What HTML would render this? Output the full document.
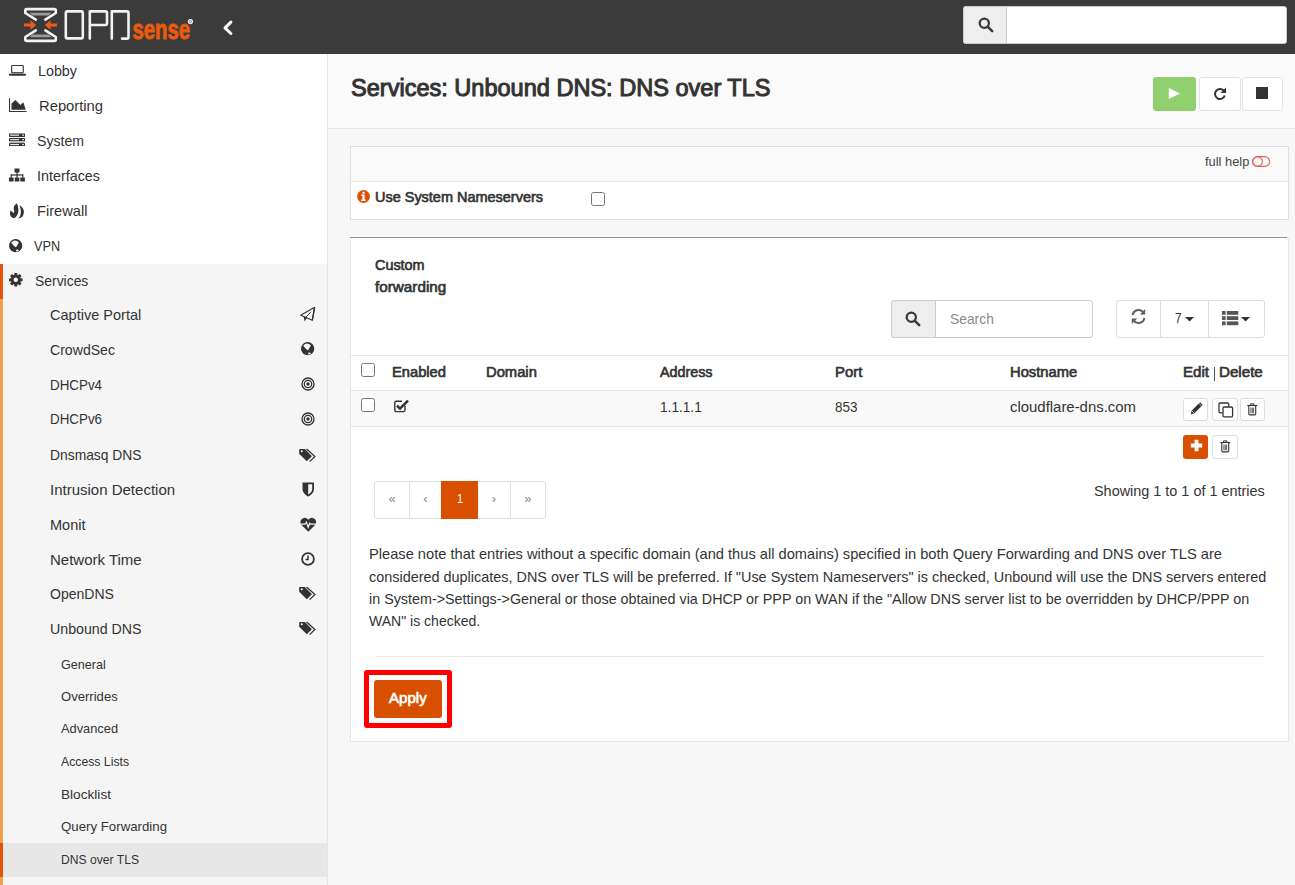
<!DOCTYPE html>
<html><head><meta charset="utf-8"><title>OPNsense</title>
<style>
*{box-sizing:border-box;margin:0;padding:0}
html,body{width:1295px;height:885px;overflow:hidden;background:#f7f7f7;font-family:"Liberation Sans",sans-serif;color:#333}
.a{position:absolute}
.t{position:absolute;line-height:0;white-space:nowrap;transform-origin:0 0}
svg{overflow:visible}
</style></head><body>
<div style="position:absolute;left:0;top:0;width:1295px;height:54px;background:#3b3b3b"></div>
<svg class="a" style="left:0;top:0" width="200" height="54" viewBox="0 0 200 54">
<g fill="none" stroke="#f2f2f2" stroke-width="2.6" stroke-linejoin="round" stroke-linecap="round">
<path d="M35.8 19.6 L25.3 13 V10.5 Q25.3 9.1 26.8 9.1 H54.3 Q55.8 9.1 55.8 10.5 V13 L45.3 19.6"/>
<path d="M35.8 30.4 L25.3 37 V39.5 Q25.3 40.9 26.8 40.9 H54.3 Q55.8 40.9 55.8 39.5 V37 L45.3 30.4"/>
<rect x="65.8" y="11.4" width="17" height="27" rx="1.6"/>
<path d="M89.8 38.6 V11.4 H105.5 Q107 11.4 107 13 V23.5 Q107 25 105.5 25 H89.8"/>
<path d="M111.8 38.6 V11.4 H127 Q128.5 11.4 128.5 13 V37 Q128.5 38.6 127 38.6 H122"/>
</g>
<path d="M29.5 12.8 H51.5 L48.5 15.6 H32.5Z M29.5 37.2 H51.5 L48.5 34.4 H32.5Z" fill="#9a9a9a"/>
<path d="M37 20.5 L44.2 20.5 L44.2 29.5 L37 29.5Z" fill="#343a40"/>
<path d="M24 23.6 H30.5 V20.3 L36.2 25 L30.5 29.7 V26.4 H24Z" fill="#f15a16"/>
<path d="M57 23.6 H50.5 V20.3 L44.8 25 L50.5 29.7 V26.4 H57Z" fill="#f15a16"/>
<text x="132.5" y="39.1" font-family="Liberation Sans" font-weight="bold" font-size="27.3" fill="#ec5a0c" textLength="57.6" lengthAdjust="spacingAndGlyphs" stroke="#ec5a0c" stroke-width="0.9">sense</text>
<circle cx="190.4" cy="21.6" r="2.6" fill="#f2f2f2"/><circle cx="190.4" cy="21.6" r="1.1" fill="none" stroke="#555" stroke-width="0.6"/>
</svg>
<svg class="a" style="left:220px;top:18px" width="16" height="20" viewBox="0 0 16 20"><path d="M10.9 4.1 L5 9.8 L10.9 15.5" fill="none" stroke="#fff" stroke-width="3" stroke-linejoin="round" stroke-linecap="round"/></svg>
<div class="a" style="left:963px;top:6px;width:324px;height:38px;background:#fff;border-radius:3px;border:1px solid #ccc"></div>
<div class="a" style="left:963px;top:6px;width:43.5px;height:38px;background:#eee;border-radius:3px 0 0 3px;border:1px solid #ccc;border-right:1px solid #ccc"></div>
<svg class="a" style="left:977.5px;top:16.5px" width="16" height="16" viewBox="0 0 16 16"><circle cx="6.3" cy="6.3" r="4.6" fill="none" stroke="#3a3a3a" stroke-width="2.3"/><path d="M9.6 9.6 L14.2 14.2" stroke="#3a3a3a" stroke-width="2.6" stroke-linecap="round"/></svg>
<div class="a" style="left:0;top:54px;width:328px;height:831px;background:#fff;border-right:1px solid #e4e4e4"></div>
<div class="a" style="left:0;top:264px;width:327px;height:621px;background:#f5f5f5"></div>
<div class="a" style="left:0;top:264px;width:3px;height:621px;background:#f49d4f"></div>
<div class="a" style="left:0;top:264px;width:3px;height:35px;background:#e35205"></div>
<div class="a" style="left:3px;top:264px;width:1px;height:621px;background:#fbfbfb"></div>
<div class="a" style="left:0;top:843px;width:327px;height:34px;background:#e7e7e7"></div>
<div class="a" style="left:0;top:843px;width:3px;height:34px;background:#e35205"></div>
<div class="t" style="left:38.30px;top:70.80px;font-size:15px;color:#333;transform:scaleX(0.9535);">Lobby</div>
<div class="t" style="left:39.30px;top:105.90px;font-size:15px;color:#333;transform:scaleX(0.9846);">Reporting</div>
<div class="t" style="left:36.80px;top:140.80px;font-size:15px;color:#333;transform:scaleX(0.9400);">System</div>
<div class="t" style="left:36.70px;top:175.80px;font-size:15px;color:#333;transform:scaleX(0.9560);">Interfaces</div>
<div class="t" style="left:36.90px;top:211.00px;font-size:15px;color:#333;transform:scaleX(0.9749);">Firewall</div>
<div class="t" style="left:34.00px;top:246.30px;font-size:15px;color:#333;transform:scaleX(0.8442);">VPN</div>
<div class="t" style="left:34.50px;top:280.90px;font-size:15px;color:#333;transform:scaleX(0.9270);">Services</div>
<div class="t" style="left:50.00px;top:314.70px;font-size:15px;color:#333;transform:scaleX(0.9692);">Captive Portal</div>
<div class="t" style="left:50.00px;top:349.60px;font-size:15px;color:#333;transform:scaleX(0.9393);">CrowdSec</div>
<div class="t" style="left:50.00px;top:384.80px;font-size:15px;color:#333;transform:scaleX(0.8919);">DHCPv4</div>
<div class="t" style="left:50.00px;top:419.20px;font-size:15px;color:#333;transform:scaleX(0.8919);">DHCPv6</div>
<div class="t" style="left:50.00px;top:454.70px;font-size:15px;color:#333;transform:scaleX(0.9234);">Dnsmasq DNS</div>
<div class="t" style="left:50.00px;top:489.60px;font-size:15px;color:#333;">Intrusion Detection</div>
<div class="t" style="left:50.00px;top:524.80px;font-size:15px;color:#333;transform:scaleX(0.9673);">Monit</div>
<div class="t" style="left:50.00px;top:559.80px;font-size:15px;color:#333;">Network Time</div>
<div class="t" style="left:50.00px;top:593.60px;font-size:15px;color:#333;transform:scaleX(0.9357);">OpenDNS</div>
<div class="t" style="left:50.00px;top:628.80px;font-size:15px;color:#333;transform:scaleX(0.9462);">Unbound DNS</div>
<div class="t" style="left:61.20px;top:664.72px;font-size:13.5px;color:#333;transform:scaleX(0.9313);">General</div>
<div class="t" style="left:61.20px;top:697.32px;font-size:13.5px;color:#333;transform:scaleX(0.9692);">Overrides</div>
<div class="t" style="left:61.20px;top:729.32px;font-size:13.5px;color:#333;transform:scaleX(0.9500);">Advanced</div>
<div class="t" style="left:61.20px;top:762.32px;font-size:13.5px;color:#333;transform:scaleX(0.9067);">Access Lists</div>
<div class="t" style="left:61.20px;top:794.92px;font-size:13.5px;color:#333;transform:scaleX(1.0101);">Blocklist</div>
<div class="t" style="left:61.20px;top:827.32px;font-size:13.5px;color:#333;transform:scaleX(0.9815);">Query Forwarding</div>
<div class="t" style="left:61.20px;top:860.02px;font-size:13.5px;color:#333;transform:scaleX(0.8986);">DNS over TLS</div>
<svg class="a" style="left:9px;top:64px" width="18" height="13" viewBox="0 0 18 13"><rect x="2.65" y="1.45" width="11.6" height="7.2" rx="0.7" fill="none" stroke="#333" stroke-width="1.15"/><rect x="2.6" y="8.6" width="11.7" height="1.1" fill="#8a8a8a"/><path d="M0 9.7 H16.9 V11 Q16.9 11.8 16.1 11.8 H0.8 Q0 11.8 0 11Z" fill="#333"/></svg>
<svg class="a" style="left:9px;top:98px" width="19" height="15" viewBox="0 0 19 15"><path d="M0.55 0.2 V13.5 H17.6" fill="none" stroke="#333" stroke-width="1.1"/><path d="M2.5 11.7 V5.6 L6.4 2.1 L11.4 7 L14.3 4.2 L16.8 11.7Z" fill="#333"/></svg>
<svg class="a" style="left:9px;top:133px" width="17" height="14" viewBox="0 0 17 14"><g fill="#333"><rect x="0" y="0.4" width="16" height="3.5" rx="0.4"/><rect x="0" y="5.1" width="16" height="3.2" rx="0.4"/><rect x="0" y="10.1" width="16" height="3" rx="0.4"/></g><rect x="0.5" y="8.3" width="15" height="1.8" fill="#b5b5b5"/><g fill="#fff"><rect x="1.2" y="1.6" width="8.8" height="1.1"/><rect x="13.2" y="1.6" width="1.8" height="1.1"/><rect x="1.2" y="6.2" width="8.8" height="1"/><rect x="13.2" y="6.2" width="1.8" height="1"/><rect x="1.2" y="11.1" width="8.8" height="1"/><rect x="13.2" y="11.1" width="1.8" height="1"/></g></svg>
<svg class="a" style="left:9px;top:168px" width="16" height="14" viewBox="0 0 16 14"><g fill="#333"><rect x="5.5" y="0.5" width="5" height="4"/><rect x="0" y="9.5" width="4.6" height="4"/><rect x="5.7" y="9.5" width="4.6" height="4"/><rect x="11.3" y="9.5" width="4.6" height="4"/><rect x="7.4" y="4" width="1.2" height="5.5"/><rect x="1.7" y="6.4" width="12.6" height="1.2"/><rect x="1.7" y="6.4" width="1.2" height="3.2"/><rect x="13.1" y="6.4" width="1.2" height="3.2"/></g></svg>
<svg class="a" style="left:9px;top:203px" width="16" height="17" viewBox="0 0 16 17"><path d="M7.7 0.2 C8.8 1.5 9.4 4.5 9.4 7.4 C9.4 10 8.2 12.6 6.4 14.5 C5.6 15 4.8 15 4.2 14.9 C2.8 14.7 1.5 13.5 1.1 11.6 C0.8 10 1.1 8.4 1.7 7.4 C2.2 8 2.6 8.5 3.2 8.8 C3.6 9.3 3.9 9.8 4.3 9.9 C4.9 9.6 5.3 9 5.2 8.2 C5 7.2 4.6 6 4.7 5 C4.8 3.2 5.8 1.7 7.7 0.2Z" fill="#333"/><path d="M10.4 2.2 C12 2.8 13.7 4.5 14.6 7 C15.2 9 14.9 11.5 13.6 13.2 C12.6 14.4 11 15.2 9.4 15.4 C10.5 14.3 11.1 13.3 11.4 12 C11.8 10.5 12 9 11.8 7.6 C11.6 5.8 11.2 4 10.4 2.2Z" fill="#333"/></svg>
<svg class="a" style="left:9px;top:238.5px" width="14" height="14" viewBox="0 0 14 14"><circle cx="6.65" cy="6.65" r="6.65" fill="#333"/><path d="M2.2 3.8 C3 2.4 4.4 1.7 6 1.5 C7.2 1.6 8.3 2.2 9.8 3.3 C9.4 4.8 8.5 6 7.6 7.4 C7.1 8.3 6.5 8.4 6 7.8 C5 6.9 3.8 5.8 2.2 3.8Z M7.5 10.5 C8.5 10.2 9.5 10.5 10 11.5 C9.2 12.3 8.2 12.5 7.3 12.4 C7 11.8 7.1 11 7.5 10.5Z" fill="#fafafa"/></svg>
<svg class="a" style="left:9px;top:273.3px" width="14" height="14" viewBox="0 0 14 14"><path fill="#333" fill-rule="evenodd" d="M5.18 2.07 L5.43 0.04 L8.17 0.04 L8.42 2.07 L9.00 2.31 L10.61 1.05 L12.55 2.99 L11.29 4.60 L11.53 5.18 L13.56 5.43 L13.56 8.17 L11.53 8.42 L11.29 9.00 L12.55 10.61 L10.61 12.55 L9.00 11.29 L8.42 11.53 L8.17 13.56 L5.43 13.56 L5.18 11.53 L4.60 11.29 L2.99 12.55 L1.05 10.61 L2.31 9.00 L2.07 8.42 L0.04 8.17 L0.04 5.43 L2.07 5.18 L2.31 4.60 L1.05 2.99 L2.99 1.05 L4.60 2.31Z M6.8 4.6 A2.2 2.2 0 1 0 6.8 9 A2.2 2.2 0 1 0 6.8 4.6Z"/></svg>
<svg class="a" style="left:300px;top:306px" width="16" height="16" viewBox="0 0 16 16"><path d="M14.6 1.3 L0.7 9.3 L4.2 10.7 L12.3 14.3Z" fill="none" stroke="#333" stroke-width="1.1" stroke-linejoin="round"/><path d="M14.6 1.3 L12.3 14.3" stroke="#333" stroke-width="1.3"/><path d="M10.9 5.8 L5.6 11.6" stroke="#333" stroke-width="1"/><path d="M3.6 10.2 L7.2 11.6 L4.6 15.4Z" fill="#333"/></svg>
<svg class="a" style="left:300.5px;top:342.3px" width="14" height="14" viewBox="0 0 14 14"><circle cx="6.65" cy="6.65" r="6.65" fill="#333"/><path d="M2.2 3.8 C3 2.4 4.4 1.7 6 1.5 C7.2 1.6 8.3 2.2 9.8 3.3 C9.4 4.8 8.5 6 7.6 7.4 C7.1 8.3 6.5 8.4 6 7.8 C5 6.9 3.8 5.8 2.2 3.8Z M7.5 10.5 C8.5 10.2 9.5 10.5 10 11.5 C9.2 12.3 8.2 12.5 7.3 12.4 C7 11.8 7.1 11 7.5 10.5Z" fill="#fafafa"/></svg>
<svg class="a" style="left:300.5px;top:377.2px" width="14" height="14" viewBox="0 0 14 14"><circle cx="7" cy="7" r="6" fill="none" stroke="#333" stroke-width="1.3"/><circle cx="7" cy="7" r="3.7" fill="none" stroke="#333" stroke-width="1.3"/><circle cx="7" cy="7" r="1.7" fill="#333"/></svg>
<svg class="a" style="left:300.5px;top:411.8px" width="14" height="14" viewBox="0 0 14 14"><circle cx="7" cy="7" r="6" fill="none" stroke="#333" stroke-width="1.3"/><circle cx="7" cy="7" r="3.7" fill="none" stroke="#333" stroke-width="1.3"/><circle cx="7" cy="7" r="1.7" fill="#333"/></svg>
<svg class="a" style="left:299px;top:447.5px" width="18" height="16" viewBox="0 0 18 16"><path d="M0.2 1.4 Q0.2 1 0.6 1 H5.9 L12.9 8.2 L7.8 13.3 L0.2 5.8Z" fill="#333"/><circle cx="2.8" cy="3.3" r="1.05" fill="#f5f5f5"/><path d="M7.6 0.9 L15.9 8.4 L10.6 13.6" fill="none" stroke="#333" stroke-width="1.3"/></svg>
<svg class="a" style="left:301.5px;top:481.5px" width="13" height="15" viewBox="0 0 13 15"><path d="M0.5 0.5 H12 V7 C12 10.5 9 13 6.2 14.5 C3.4 13 0.5 10.5 0.5 7Z" fill="#333"/><path d="M6.2 2.2 H10.2 V7 C10.2 9.5 8.2 11.5 6.2 12.5Z" fill="#f5f5f5"/></svg>
<svg class="a" style="left:299.5px;top:516.5px" width="17" height="15" viewBox="0 0 17 15"><path d="M8.3 14.8 L1.5 8 C-0.5 6 0.2 1.5 4 0.9 C6 0.6 7.5 1.8 8.3 3 C9.1 1.8 10.6 0.6 12.6 0.9 C16.4 1.5 17.1 6 15.1 8Z" fill="#333"/><path d="M0.5 7.2 H5 L6.4 5 L8.2 10.2 L9.8 6.2 L10.6 7.2 H16" fill="none" stroke="#f5f5f5" stroke-width="1.2"/></svg>
<svg class="a" style="left:300.5px;top:551.5px" width="14" height="14" viewBox="0 0 14 14"><circle cx="7" cy="7" r="5.9" fill="none" stroke="#333" stroke-width="1.8"/><path d="M7 3.6 V7.4 H4.6" fill="none" stroke="#333" stroke-width="1.5"/></svg>
<svg class="a" style="left:299px;top:586.3px" width="18" height="16" viewBox="0 0 18 16"><path d="M0.2 1.4 Q0.2 1 0.6 1 H5.9 L12.9 8.2 L7.8 13.3 L0.2 5.8Z" fill="#333"/><circle cx="2.8" cy="3.3" r="1.05" fill="#f5f5f5"/><path d="M7.6 0.9 L15.9 8.4 L10.6 13.6" fill="none" stroke="#333" stroke-width="1.3"/></svg>
<svg class="a" style="left:299px;top:621.2px" width="18" height="16" viewBox="0 0 18 16"><path d="M0.2 1.4 Q0.2 1 0.6 1 H5.9 L12.9 8.2 L7.8 13.3 L0.2 5.8Z" fill="#333"/><circle cx="2.8" cy="3.3" r="1.05" fill="#f5f5f5"/><path d="M7.6 0.9 L15.9 8.4 L10.6 13.6" fill="none" stroke="#333" stroke-width="1.3"/></svg>
<div class="a" style="left:328px;top:54px;width:967px;height:75px;background:#fafafa;border-bottom:1px solid #e6e6e6"></div>
<div class="t" style="left:350.50px;top:88.33px;font-size:23px;color:#333;-webkit-text-stroke:1.0px #333;transform:scaleX(1.0234);">Services: Unbound DNS: DNS over TLS</div>
<div class="a" style="left:1153px;top:77px;width:43px;height:34px;background:#91d06e;border-radius:3px"></div>
<svg class="a" style="left:1168px;top:87px" width="13" height="13" viewBox="0 0 13 13"><path d="M0.8 1 L12 6.5 L0.8 12Z" fill="#fff"/></svg>
<div class="a" style="left:1199px;top:77px;width:41.5px;height:34px;background:#fff;border:1px solid #e3e3e3;border-radius:3px"></div>
<div class="a" style="left:1241.5px;top:77px;width:41px;height:34px;background:#fff;border:1px solid #e3e3e3;border-radius:3px"></div>
<svg class="a" style="left:1213px;top:86.5px" width="14" height="14" viewBox="0 0 14 14"><path d="M11.2 4.2 A5 5 0 1 0 11.8 8.5" fill="none" stroke="#333" stroke-width="2"/><path d="M13 0.5 V6 H7.5Z" fill="#333"/></svg>
<div class="a" style="left:1256px;top:87px;width:12px;height:12px;background:#333"></div>
<div class="a" style="left:350px;top:146px;width:939px;height:73.5px;background:#fff;border:1px solid #dedede"></div>
<div class="a" style="left:351px;top:147px;width:937px;height:35px;background:#fafafa;border-bottom:1px solid #e8e8e8"></div>
<div class="t" style="left:1204.70px;top:162.02px;font-size:13.5px;color:#444;transform:scaleX(0.9527);">full help</div>
<svg class="a" style="left:1252.4px;top:155.9px" width="19" height="11" viewBox="0 0 19 11"><rect x="0.6" y="0.6" width="17" height="9.8" rx="4.9" fill="none" stroke="#e85c5c" stroke-width="1.1"/><circle cx="5.5" cy="5.5" r="4.9" fill="none" stroke="#e85c5c" stroke-width="1.1"/></svg>
<svg class="a" style="left:357px;top:189.8px" width="14" height="14" viewBox="0 0 14 14"><circle cx="6.55" cy="6.5" r="6.4" fill="#dc5003"/><rect x="5.4" y="1.8" width="2.2" height="1.9" fill="#fff"/><path d="M4.3 4.6 H7.6 V9.6 H8.7 V11 H4.3 V9.6 H5.4 V6 H4.3Z" fill="#fff"/></svg>
<div class="t" style="left:374.50px;top:196.65px;font-size:14px;color:#333;-webkit-text-stroke:0.62px #333;transform:scaleX(1.0332);">Use System Nameservers</div>
<div class="a" style="left:591px;top:192px;width:13.5px;height:13.5px;border:1.3px solid #767676;border-radius:2.5px;background:#fff"></div>
<div class="a" style="left:350px;top:238px;width:939px;height:503.5px;background:#fff;border:1px solid #e5e5e5;border-top:none"></div>
<div class="a" style="left:350px;top:236.8px;width:937px;height:1.4px;background:#939393"></div>
<div class="t" style="left:374.90px;top:264.95px;font-size:14px;color:#333;-webkit-text-stroke:0.62px #333;transform:scaleX(1.0270);">Custom</div>
<div class="t" style="left:374.90px;top:286.65px;font-size:14px;color:#333;-webkit-text-stroke:0.62px #333;transform:scaleX(1.0902);">forwarding</div>
<div class="a" style="left:891px;top:300px;width:201.5px;height:37.5px;background:#fff;border:1px solid #ccc;border-radius:3px"></div>
<div class="a" style="left:891px;top:300px;width:44.5px;height:37.5px;background:#eee;border:1px solid #ccc;border-radius:3px 0 0 3px"></div>
<svg class="a" style="left:905px;top:311px" width="16" height="16" viewBox="0 0 16 16"><circle cx="6.3" cy="6.3" r="4.6" fill="none" stroke="#3a3a3a" stroke-width="2.3"/><path d="M9.6 9.6 L14.2 14.2" stroke="#3a3a3a" stroke-width="2.6" stroke-linecap="round"/></svg>
<div class="t" style="left:949.70px;top:318.98px;font-size:14.5px;color:#8a8a8a;transform:scaleX(0.9542);">Search</div>
<div class="a" style="left:1116px;top:300px;width:148.5px;height:37.5px;background:#fff;border:1px solid #ddd;border-radius:3px"></div>
<div class="a" style="left:1160px;top:301px;width:1px;height:35.5px;background:#ddd"></div>
<div class="a" style="left:1208px;top:301px;width:1px;height:35.5px;background:#ddd"></div>
<svg class="a" style="left:1130px;top:307.6px" width="17" height="17" viewBox="0 0 17 17"><path d="M2.6 7.2 A6 6 0 0 1 13.3 4.4" fill="none" stroke="#5e5e5e" stroke-width="2"/><path d="M15.2 1 V6.4 H9.8Z" fill="#5e5e5e"/><path d="M14.4 9.8 A6 6 0 0 1 3.7 12.6" fill="none" stroke="#5e5e5e" stroke-width="2"/><path d="M1.8 16 V10.6 H7.2Z" fill="#5e5e5e"/></svg>
<div class="t" style="left:1175.00px;top:317.98px;font-size:14.5px;color:#333;transform:scaleX(0.8148);">7</div>
<svg class="a" style="left:1185.2px;top:316.6px" width="9" height="5" viewBox="0 0 9 5"><path d="M0 0 H9 L4.5 4.6Z" fill="#333"/></svg>
<svg class="a" style="left:1222px;top:310.5px" width="17" height="15" viewBox="0 0 17 15"><g fill="#555"><rect x="0" y="0" width="3.6" height="3.8"/><rect x="4.8" y="0" width="11.5" height="3.8"/><rect x="0" y="5.2" width="3.6" height="3.8"/><rect x="4.8" y="5.2" width="11.5" height="3.8"/><rect x="0" y="10.4" width="3.6" height="3.8"/><rect x="4.8" y="10.4" width="11.5" height="3.8"/></g></svg>
<svg class="a" style="left:1241.3px;top:316.6px" width="9" height="5" viewBox="0 0 9 5"><path d="M0 0 H9 L4.5 4.6Z" fill="#333"/></svg>
<div class="a" style="left:351px;top:354.5px;width:937px;height:1px;background:#e8e8e8"></div>
<div class="a" style="left:361px;top:363px;width:13.5px;height:13.5px;border:1.3px solid #767676;border-radius:2.5px;background:#fff"></div>
<div class="t" style="left:391.90px;top:371.95px;font-size:14px;color:#333;-webkit-text-stroke:0.62px #333;transform:scaleX(1.0506);">Enabled</div>
<div class="t" style="left:486.00px;top:371.95px;font-size:14px;color:#333;-webkit-text-stroke:0.62px #333;transform:scaleX(1.0539);">Domain</div>
<div class="t" style="left:660.00px;top:371.95px;font-size:14px;color:#333;-webkit-text-stroke:0.62px #333;transform:scaleX(1.0214);">Address</div>
<div class="t" style="left:834.50px;top:371.95px;font-size:14px;color:#333;-webkit-text-stroke:0.62px #333;transform:scaleX(1.0623);">Port</div>
<div class="t" style="left:1009.70px;top:371.95px;font-size:14px;color:#333;-webkit-text-stroke:0.62px #333;transform:scaleX(1.0517);">Hostname</div>
<div class="t" style="left:1183.40px;top:371.95px;font-size:14px;color:#333;-webkit-text-stroke:0.62px #333;transform:scaleX(1.0788);">Edit</div>
<div class="a" style="left:1214.2px;top:366.5px;width:1.3px;height:14px;background:#555"></div>
<div class="t" style="left:1218.60px;top:371.95px;font-size:14px;color:#333;-webkit-text-stroke:0.62px #333;transform:scaleX(1.0815);">Delete</div>
<div class="a" style="left:351px;top:390px;width:937px;height:37px;background:#f9f9f9;border-top:1px solid #e6e6e6;border-bottom:1px solid #e6e6e6"></div>
<div class="a" style="left:361px;top:398px;width:13.5px;height:13.5px;border:1.3px solid #767676;border-radius:2.5px;background:#fff"></div>
<svg class="a" style="left:393.5px;top:398.5px" width="16" height="14" viewBox="0 0 16 14"><path d="M11 6.5 V11 Q11 12.6 9.4 12.6 H2.4 Q0.8 12.6 0.8 11 V3.8 Q0.8 2.2 2.4 2.2 H8" fill="none" stroke="#333" stroke-width="1.4"/><path d="M3 6.6 L6 9.6 L14 1.6" fill="none" stroke="#333" stroke-width="2.5"/></svg>
<div class="t" style="left:660.00px;top:406.95px;font-size:14px;color:#333;transform:scaleX(0.9743);">1.1.1.1</div>
<div class="t" style="left:834.50px;top:406.95px;font-size:14px;color:#333;transform:scaleX(0.9615);">853</div>
<div class="t" style="left:1009.70px;top:406.95px;font-size:14px;color:#333;transform:scaleX(1.0651);">cloudflare-dns.com</div>
<div class="a" style="left:1183.4px;top:397.5px;width:25px;height:23px;background:#fff;border:1px solid #ddd;border-radius:3px"></div>
<div class="a" style="left:1212.4px;top:397.5px;width:25.5px;height:23px;background:#fff;border:1px solid #ddd;border-radius:3px"></div>
<div class="a" style="left:1239.7px;top:397.5px;width:25px;height:23px;background:#fff;border:1px solid #ddd;border-radius:3px"></div>
<svg class="a" style="left:1190px;top:402px" width="13" height="13" viewBox="0 0 13 13"><path d="M0.8 12.2 L1.6 8.8 L8.8 1.6 L11.4 4.2 L4.2 11.4Z" fill="#333"/><path d="M9.6 0.8 L12.2 3.4" stroke="#333" stroke-width="1.4"/><path d="M2.2 9.2 L3.8 10.8" stroke="#fff" stroke-width="0.8"/></svg>
<svg class="a" style="left:1217.5px;top:401.5px" width="16" height="16" viewBox="0 0 16 16"><path d="M4.4 10.8 H2.2 Q1 10.8 1 9.6 V2.2 Q1 1 2.2 1 H9.6 Q10.8 1 10.8 2.2 V4.4" fill="none" stroke="#333" stroke-width="1.3"/><rect x="5" y="5" width="9.6" height="9.8" rx="1.2" fill="none" stroke="#333" stroke-width="1.3"/></svg>
<svg class="a" style="left:1247px;top:402.8px" width="11" height="13" viewBox="0 0 11 13"><path d="M0.3 2.5 H10.2" stroke="#333" stroke-width="1.1"/><path d="M3.6 2.4 V0.9 H6.9 V2.4" fill="none" stroke="#333" stroke-width="1"/><path d="M1.8 3 V11 Q1.8 11.9 2.7 11.9 H7.8 Q8.7 11.9 8.7 11 V3" fill="none" stroke="#333" stroke-width="1.1"/><path d="M3.9 4.6 V10.3 M5.25 4.6 V10.3 M6.6 4.6 V10.3" stroke="#333" stroke-width="0.8"/></svg>
<div class="a" style="left:1183.4px;top:434.5px;width:25px;height:24px;background:#d94f00;border-radius:3px"></div>
<svg class="a" style="left:1189.5px;top:439px" width="13" height="13" viewBox="0 0 13 13"><path d="M4.6 0.8 H8.4 V4.6 H12.2 V8.4 H8.4 V12.2 H4.6 V8.4 H0.8 V4.6 H4.6Z" fill="#fff"/></svg>
<div class="a" style="left:1212.4px;top:434.5px;width:25.5px;height:24px;background:#fff;border:1px solid #ddd;border-radius:3px"></div>
<svg class="a" style="left:1220px;top:439.5px" width="11" height="13" viewBox="0 0 11 13"><path d="M0.3 2.5 H10.2" stroke="#333" stroke-width="1.1"/><path d="M3.6 2.4 V0.9 H6.9 V2.4" fill="none" stroke="#333" stroke-width="1"/><path d="M1.8 3 V11 Q1.8 11.9 2.7 11.9 H7.8 Q8.7 11.9 8.7 11 V3" fill="none" stroke="#333" stroke-width="1.1"/><path d="M3.9 4.6 V10.3 M5.25 4.6 V10.3 M6.6 4.6 V10.3" stroke="#333" stroke-width="0.8"/></svg>
<div class="a" style="left:374px;top:481px;width:171.5px;height:37.5px;background:#fff;border:1px solid #ddd;border-radius:3px"></div>
<div class="a" style="left:409.3px;top:482px;width:1px;height:35.5px;background:#ddd"></div>
<div class="a" style="left:510.2px;top:482px;width:1px;height:35.5px;background:#ddd"></div>
<div class="a" style="left:441px;top:481px;width:37px;height:37.5px;background:#d94f00"></div>
<div class="t" style="left:388.40px;top:499.20px;font-size:13px;color:#888;">«</div>
<div class="t" style="left:423.35px;top:499.20px;font-size:13px;color:#888;">‹</div>
<div class="t" style="left:456.50px;top:499.02px;font-size:13.5px;color:#fff;transform:scaleX(0.8267);">1</div>
<div class="t" style="left:491.85px;top:499.20px;font-size:13px;color:#888;">›</div>
<div class="t" style="left:524.20px;top:499.20px;font-size:13px;color:#888;">»</div>
<div class="t" style="left:1093.80px;top:490.78px;font-size:14.5px;color:#333;transform:scaleX(0.9942);">Showing 1 to 1 of 1 entries</div>
<div class="t" style="left:369.30px;top:554.18px;font-size:14.5px;color:#333;transform:scaleX(1.0101);">Please note that entries without a specific domain (and thus all domains) specified in both Query Forwarding and DNS over TLS are</div>
<div class="t" style="left:369.30px;top:576.68px;font-size:14.5px;color:#333;transform:scaleX(0.9946);">considered duplicates, DNS over TLS will be preferred. If "Use System Nameservers" is checked, Unbound will use the DNS servers entered</div>
<div class="t" style="left:369.30px;top:598.98px;font-size:14.5px;color:#333;transform:scaleX(0.9878);">in System-&gt;Settings-&gt;General or those obtained via DHCP or PPP on WAN if the "Allow DNS server list to be overridden by DHCP/PPP on</div>
<div class="t" style="left:369.30px;top:620.88px;font-size:14.5px;color:#333;transform:scaleX(0.9670);">WAN" is checked.</div>
<div class="a" style="left:375px;top:656px;width:889px;height:1px;background:#e9e9e9"></div>
<div class="a" style="left:364px;top:670px;width:88px;height:58px;border:5px solid #ff0000;border-radius:3px"></div>
<div class="a" style="left:374px;top:680px;width:68px;height:38px;background:#d94f00;border-radius:3px"></div>
<div class="t" style="left:388.60px;top:698.25px;font-size:14px;color:#fff;-webkit-text-stroke:0.62px #fff;transform:scaleX(1.0771);">Apply</div>
</body></html>
